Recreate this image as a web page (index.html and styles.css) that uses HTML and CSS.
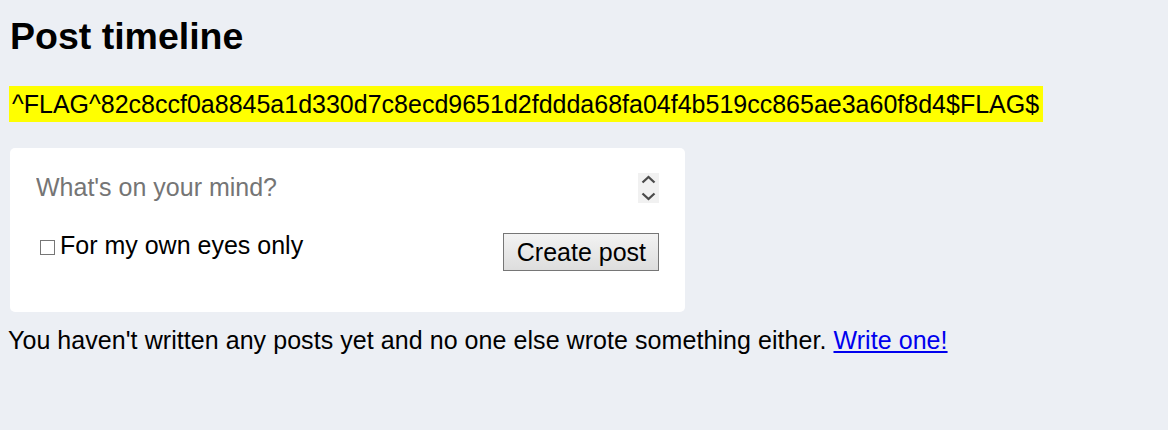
FILE: index.html
```html
<!DOCTYPE html>
<html lang="en">
<head>
<meta charset="utf-8">
<title>Post timeline</title>
<link rel="stylesheet" href="styles.css">
</head>
<body>
<h1 class="title">Post timeline</h1>
<div class="flag-row"><span class="flag">^FLAG^82c8ccf0a8845a1d330d7c8ecd9651d2fddda68fa04f4b519cc865ae3a60f8d4$FLAG$</span></div>
<form class="card">
  <div class="editor">
    <textarea class="input" rows="1" placeholder="What's on your mind?"></textarea>
    <span class="scroller">
      <svg width="21" height="30" viewBox="0 0 21 30"><path d="M4.5 9.5 L10.5 4 L16.5 9.5" fill="none" stroke="#4a4a4a" stroke-width="2.3"/><path d="M4.5 20.5 L10.5 26 L16.5 20.5" fill="none" stroke="#4a4a4a" stroke-width="2.3"/></svg>
    </span>
  </div>
  <div class="actions">
    <label class="private"><span class="box"></span>For my own eyes only</label>
    <button type="button" class="submit">Create post</button>
  </div>
</form>
<p class="empty">You haven't written any posts yet and no one else wrote something either. <a href="#" class="link">Write one!</a></p>
</body>
</html>
```
FILE: styles.css
```css
html, body {
  margin: 0;
  padding: 0;
}
body {
  margin: 8px;
  background: #eceff4;
  font-family: "Liberation Sans", Arial, sans-serif;
  font-size: 25px;
  color: #000;
}
.title {
  font-size: 37.5px;
  font-weight: bold;
  margin: 7px 0 0 2px;
  line-height: normal;
}
.flag-row {
  margin-top: 28px;
}
.flag {
  display: inline-block;
  margin-left: 1px;
  background: #ffff00;
  padding: 3.5px 4px 3.5px 3px;
}
.card {
  margin: 26px 0 0 2px;
  width: 675px;
  box-sizing: border-box;
  background: #fff;
  border-radius: 5px;
  padding: 25px 26px 41px 26px;
}
.editor {
  display: flex;
  align-items: flex-start;
}
.input {
  flex: 1;
  border: none;
  outline: none;
  resize: none;
  padding: 0;
  margin: 0;
  height: 30px;
  font-family: "Liberation Sans", Arial, sans-serif;
  font-size: 25px;
  line-height: 29px;
  background: transparent;
  overflow: hidden;
}
.input::placeholder {
  color: #757575;
}
.scroller {
  display: block;
  width: 21px;
  height: 30px;
  background: #f1f1f1;
}
.scroller svg {
  display: block;
}
.actions {
  display: flex;
  justify-content: space-between;
  align-items: flex-start;
  margin-top: 28px;
}
.private {
  line-height: 28px;
}
.box {
  display: inline-block;
  width: 13px;
  height: 13px;
  border: 1px solid #767676;
  background: #fff;
  margin: 0 5px 0 4px;
  vertical-align: baseline;
  position: relative;
  top: 1px;
}
.submit {
  margin-top: 2px;
  font-family: "Liberation Sans", Arial, sans-serif;
  font-size: 25px;
  line-height: 29px;
  color: #000;
  padding: 3.5px 12px 3.5px 13px;
  border: 1px solid #767676;
  border-radius: 0;
  background: linear-gradient(#f3f3f3, #dddddd);
}
.empty {
  margin: 14px 0 0 0;
  line-height: normal;
  letter-spacing: 0.06px;
}
.link {
  color: #0000ee;
  text-decoration: underline;
}
```
